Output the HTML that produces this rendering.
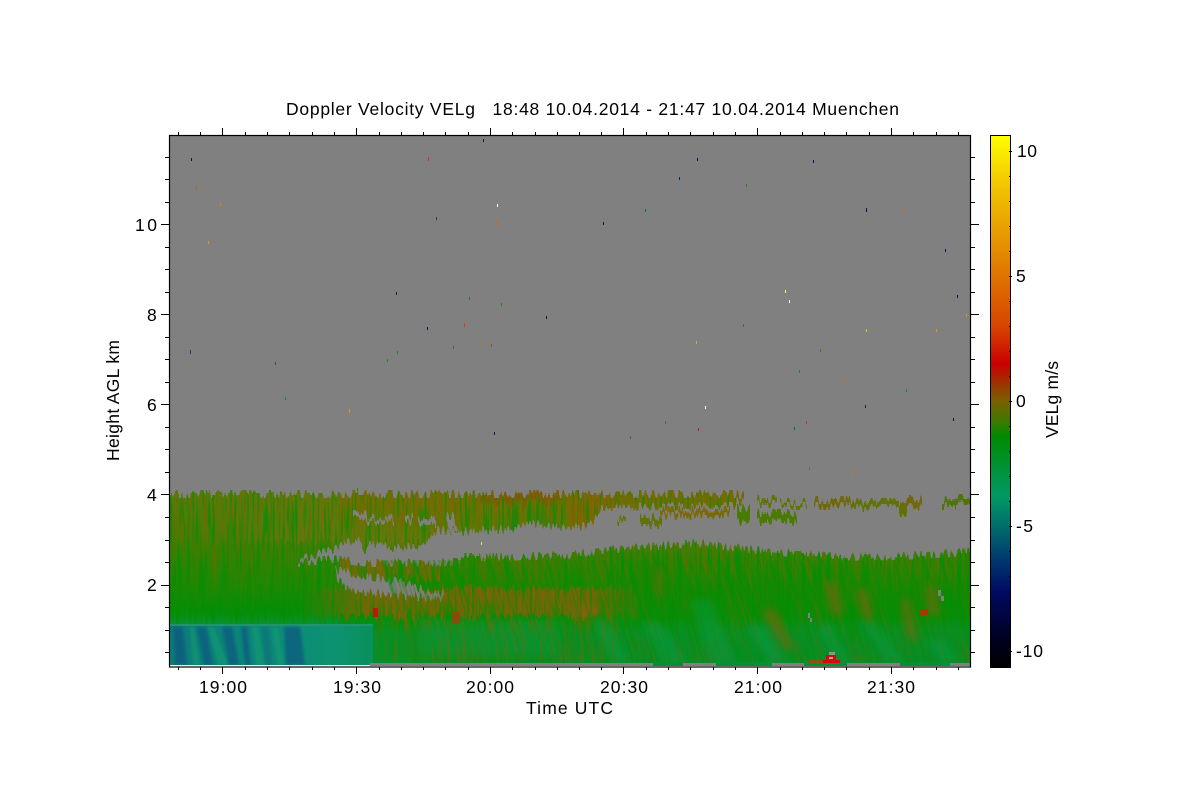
<!DOCTYPE html>
<html><head><meta charset="utf-8"><title>Doppler Velocity VELg</title>
<style>
html,body{margin:0;padding:0;background:#fff;width:1200px;height:800px;overflow:hidden}
svg{display:block}
text{font-family:"Liberation Sans",sans-serif;font-size:17.5px;fill:#000;white-space:pre}
</style></head><body>
<svg width="1200" height="800" viewBox="0 0 1200 800" xmlns="http://www.w3.org/2000/svg">
<defs>
<clipPath id="plot"><rect x="170" y="136" width="800" height="530"/></clipPath>
<clipPath id="lowR"><rect x="375" y="560" width="595" height="104"/></clipPath>
<linearGradient id="bar" x1="0" y1="135" x2="0" y2="667" gradientUnits="userSpaceOnUse">
<stop offset="0" stop-color="#ffff00"/>
<stop offset=".09" stop-color="#f2c800"/>
<stop offset=".23" stop-color="#e28600"/>
<stop offset=".36" stop-color="#d84400"/>
<stop offset=".43" stop-color="#ca0000"/>
<stop offset=".465" stop-color="#a03000"/>
<stop offset=".5" stop-color="#7a6000"/>
<stop offset=".54" stop-color="#3a7a00"/>
<stop offset=".565" stop-color="#008a00"/>
<stop offset=".68" stop-color="#009966"/>
<stop offset=".74" stop-color="#006a6a"/>
<stop offset=".79" stop-color="#003f70"/>
<stop offset=".86" stop-color="#000a60"/>
<stop offset=".95" stop-color="#000020"/>
<stop offset="1" stop-color="#000000"/>
</linearGradient>
<linearGradient id="left" x1="0" y1="494" x2="0" y2="626" gradientUnits="userSpaceOnUse">
<stop offset="0" stop-color="#5a7a0a"/><stop offset=".35" stop-color="#407e04"/>
<stop offset=".68" stop-color="#1e8802"/><stop offset=".9" stop-color="#068e06"/><stop offset="1" stop-color="#0a9030"/>
</linearGradient>
<linearGradient id="right" x1="0" y1="540" x2="0" y2="666" gradientUnits="userSpaceOnUse">
<stop offset="0" stop-color="#627408"/><stop offset=".12" stop-color="#3e7e04"/><stop offset=".35" stop-color="#148a02"/>
<stop offset=".62" stop-color="#068e08"/><stop offset=".72" stop-color="#049024"/><stop offset="1" stop-color="#068e28"/>
</linearGradient>
<linearGradient id="top" x1="0" y1="494" x2="0" y2="535" gradientUnits="userSpaceOnUse">
<stop offset="0" stop-color="#7a6a04"/><stop offset="1" stop-color="#5c7804"/>
</linearGradient>
<linearGradient id="fadeTop" x1="170" y1="0" x2="800" y2="0" gradientUnits="userSpaceOnUse">
<stop offset="0" stop-color="#62780c" stop-opacity="0"/><stop offset=".22" stop-color="#62780c" stop-opacity="1"/>
<stop offset="1" stop-color="#62780c" stop-opacity="1"/>
</linearGradient>
<linearGradient id="brown" x1="300" y1="0" x2="640" y2="0" gradientUnits="userSpaceOnUse">
<stop offset="0" stop-color="#866008" stop-opacity="0"/><stop offset=".2" stop-color="#866008" stop-opacity=".9"/>
<stop offset=".85" stop-color="#866008" stop-opacity=".95"/><stop offset="1" stop-color="#866008" stop-opacity=".2"/>
</linearGradient>
<linearGradient id="teal" x1="170" y1="0" x2="376" y2="0" gradientUnits="userSpaceOnUse">
<stop offset="0" stop-color="#0c7c78"/><stop offset=".55" stop-color="#0c8a78"/>
<stop offset=".8" stop-color="#0c9270"/><stop offset="1" stop-color="#0a9058"/>
</linearGradient>
<linearGradient id="fadeV" x1="0" y1="497" x2="0" y2="625" gradientUnits="userSpaceOnUse">
<stop offset="0" stop-color="#000"/><stop offset=".5" stop-color="#000" stop-opacity=".6"/><stop offset=".85" stop-color="#000" stop-opacity="0"/>
</linearGradient>
<filter id="sBrown" x="0" y="0" width="1" height="1" color-interpolation-filters="sRGB">
<feTurbulence type="fractalNoise" baseFrequency="0.42 0.022" numOctaves="2" seed="4"/>
<feColorMatrix values="0 0 0 0 .52  0 0 0 0 .38  0 0 0 0 0  5 0 0 0 -2.4"/>
<feComposite operator="in" in2="SourceAlpha"/>
</filter>
<filter id="sGreen" x="0" y="0" width="1" height="1" color-interpolation-filters="sRGB">
<feTurbulence type="fractalNoise" baseFrequency="0.4 0.02" numOctaves="2" seed="11"/>
<feColorMatrix values="0 0 0 0 0  0 0 0 0 .56  0 0 0 0 .02  5 0 0 0 -2.4"/>
<feComposite operator="in" in2="SourceAlpha"/>
</filter>
<filter id="jag" x="0" y="0" width="1" height="1" color-interpolation-filters="sRGB">
<feTurbulence type="fractalNoise" baseFrequency="0.4 0.015" numOctaves="1" seed="7" result="n"/>
<feColorMatrix in="n" values="0 0 0 0 .5  2.6 0 0 0 -.8  0 0 0 0 .5  0 0 0 0 1" result="m0"/>
<feComponentTransfer in="m0" result="m"><feFuncG type="discrete" tableValues="0 .2 .4 .6 .8 1"/></feComponentTransfer>
<feDisplacementMap in="SourceGraphic" in2="m" scale="8" xChannelSelector="R" yChannelSelector="G"/>
</filter>
<filter id="b1" x="-20%" y="-20%" width="140%" height="140%"><feGaussianBlur stdDeviation="1.4"/></filter>
<filter id="b3" x="-30%" y="-20%" width="160%" height="140%"><feGaussianBlur stdDeviation="4"/></filter>
</defs>

<text x="286" y="115" textLength="613" lengthAdjust="spacing" xml:space="preserve">Doppler Velocity VELg   18:48 10.04.2014 - 21:47 10.04.2014 Muenchen</text>

<g clip-path="url(#plot)">
<rect x="170" y="136" width="800" height="530" fill="#808080"/>
<g filter="url(#jag)">
<rect x="160" y="130" width="820" height="546" fill="none"/>
<rect x="160" y="494" width="200" height="136" fill="url(#left)"/>
<rect x="340" y="500" width="640" height="175" fill="url(#right)"/>
<rect x="160" y="494" width="660" height="48" fill="url(#fadeTop)"/>
<rect x="340" y="494" width="460" height="34" fill="url(#top)"/>
<rect x="295" y="588" width="345" height="29" fill="url(#brown)"/>
<rect x="340" y="560" width="100" height="18" fill="#7a6808"/>
<rect x="570" y="494" width="50" height="38" fill="#8a6204" opacity=".8"/>
<rect x="480" y="494" width="80" height="8" fill="#8c5206" opacity=".75"/>
<!-- streak overlays -->
<rect x="170" y="494" width="800" height="125" fill="url(#fadeV)" filter="url(#sBrown)" opacity=".6"/>
<rect x="170" y="494" width="800" height="125" fill="#000" filter="url(#sGreen)" opacity=".7"/>
<rect x="600" y="545" width="370" height="60" fill="#000" filter="url(#sGreen)" opacity=".5"/>
<!-- gray holes -->
<g fill="#808080">
<polygon points="338,548 345,543 360,539 366,553 369,542 393,548 423,546 437,530 457,532 513,529 527,523 570,528 590,525 603,507 735,506 740,488 985,488 985,551 903,556 837,557 757,550 700,543 603,550 570,555 493,557 463,557 457,562 370,563 333,559 298,563 298,560"/>
<polygon points="335,570 367,576 407,583 423,590 443,593 444,599 393,595 363,592 345,587 337,578"/>
<rect x="353" y="514" width="14" height="5"/><rect x="364" y="518" width="30" height="4"/>
<rect x="405" y="517" width="8" height="5"/><rect x="418" y="518" width="18" height="6"/>
<polygon points="446,516 453,516 458,530 448,530"/>
</g>
<!-- islands of echo -->
<g fill="#5f7404">
<rect x="660" y="510" width="70" height="6" fill="#7a6a06"/>
<rect x="640" y="517" width="22" height="8"/><rect x="617" y="518" width="9" height="4"/>
<rect x="737" y="508" width="13" height="14" fill="#4a7a04"/><rect x="757" y="513" width="40" height="9" fill="#4a7a04"/>
<rect x="737" y="495" width="7" height="7" fill="#70680a"/>
<rect x="757" y="499" width="20" height="5"/><rect x="780" y="502" width="27" height="4"/>
<rect x="814" y="500" width="40" height="6" fill="#70680a"/><rect x="853" y="502" width="46" height="6"/>
<rect x="900" y="499" width="22" height="8" fill="#70680a"/><rect x="899" y="505" width="8" height="8"/>
<rect x="942" y="500" width="14" height="6" fill="#4f7604"/><rect x="955" y="495" width="18" height="6" fill="#4f7604"/>
</g>
</g>
<!-- lower-right fine slanted streaks -->
<g clip-path="url(#lowR)">
<g transform="translate(-190 0) skewX(17)">
<rect x="400" y="560" width="900" height="110" fill="#000" filter="url(#sBrown)" opacity=".28"/>
<rect x="400" y="560" width="900" height="110" fill="#000" filter="url(#sGreen)" opacity=".5"/>
</g>
</g>
<!-- broad slanted tones -->
<g fill="#0aa060" opacity=".3" filter="url(#b3)">
<polygon points="640,622 660,622 690,664 664,664"/>
<polygon points="690,600 712,600 735,664 712,664"/>
<polygon points="745,625 765,625 790,664 770,664"/>
<polygon points="818,625 832,625 850,664 836,664"/>
<polygon points="860,620 875,620 905,664 890,664"/>
<polygon points="925,640 945,640 960,664 945,664"/>
<polygon points="590,620 610,620 630,664 612,664"/>
<polygon points="420,620 560,620 560,655 420,655" opacity=".7"/>
</g>
<g fill="#866008" opacity=".6" filter="url(#b3)">
<polygon points="824,582 836,582 844,615 832,615"/>
<polygon points="855,590 866,590 874,618 864,618"/>
<polygon points="655,570 662,570 662,595 656,595"/>
<polygon points="900,600 908,600 918,640 908,640"/>
<polygon points="760,610 775,610 795,650 785,650"/>
<polygon points="925,585 935,585 940,615 928,615"/>
<polygon points="570,607 600,607 600,617 570,617"/>
</g>
<!-- thin brown specks in lower middle -->
<rect x="376" y="620" width="244" height="42" fill="#000" filter="url(#sBrown)" opacity=".4"/>
<!-- teal base left -->
<rect x="170" y="625" width="203" height="41" fill="url(#teal)"/>
<rect x="170" y="624" width="203" height="2" fill="#22946c"/>
<g fill="#0e5a80" opacity=".75" filter="url(#b1)">
<polygon points="173,627 183,627 187,665 175,665"/>
<polygon points="197,627 206,627 213,665 204,665"/>
<polygon points="222,627 232,627 239,665 229,665"/>
<polygon points="241,627 247,627 251,665 245,665"/>
<polygon points="284,627 300,627 305,665 286,665"/>
<polygon points="262,627 268,627 272,665 266,665" opacity=".5"/>
</g>
<g fill="#14a070" opacity=".5" filter="url(#b1)">
<polygon points="208,627 214,627 228,665 218,665"/>
<polygon points="190,627 194,627 200,665 193,665"/>
<polygon points="252,627 258,627 264,665 256,665"/>
<polygon points="272,627 278,627 284,665 278,665"/>
</g>
<!-- small reds & gray specks -->
<rect x="373" y="608" width="5" height="9" fill="#c01808"/>
<rect x="452" y="612" width="8" height="12" fill="#a04008" opacity=".8"/>
<rect x="920" y="609" width="8" height="6" fill="#a83808"/>
<rect x="938" y="590" width="3" height="6" fill="#808080"/><rect x="941" y="596" width="3" height="5" fill="#808080"/>
<rect x="808" y="613" width="2" height="5" fill="#808080"/><rect x="810" y="618" width="2" height="4" fill="#808080"/>
<!-- bottom strip -->
<g fill="#808080">
<rect x="370" y="663" width="385" height="3"/>
<rect x="683" y="663" width="33" height="3"/>
<rect x="772" y="663" width="32" height="3"/><rect x="847" y="663" width="53" height="3"/>
<rect x="950" y="663" width="20" height="3"/>
</g>
<g fill="#068e38"><rect x="653" y="662" width="30" height="4"/><rect x="716" y="662" width="56" height="4"/><rect x="804" y="660" width="43" height="6"/><rect x="900" y="662" width="50" height="4"/></g>
<rect x="170" y="665" width="200" height="1" fill="#e8f4f0"/>
<rect x="808" y="660" width="28" height="3" fill="#7e5a08"/>
<rect x="823" y="660" width="17" height="3" fill="#d40808"/>
<rect x="826" y="655" width="10" height="5" fill="#c81010"/>
<rect x="829" y="657" width="4" height="2" fill="#a8a8a8"/>
<rect x="829" y="652" width="6" height="3" fill="#909090"/>
<!-- scattered pixels -->
<g>
<rect x="191" y="158" width="1" height="3" fill="#0a1050"/><rect x="196" y="186" width="1" height="3" fill="#e05000"/>
<rect x="220" y="203" width="1" height="3" fill="#e88000"/><rect x="208" y="241" width="1" height="3" fill="#e89000"/>
<rect x="428" y="157" width="1" height="4" fill="#d83000"/><rect x="483" y="139" width="1" height="3" fill="#0a1050"/>
<rect x="697" y="158" width="1" height="3" fill="#0a1050"/><rect x="679" y="177" width="1" height="3" fill="#00304a"/>
<rect x="813" y="160" width="1" height="3" fill="#0a1050"/><rect x="746" y="184" width="1" height="3" fill="#1a8a20"/>
<rect x="436" y="217" width="1" height="3" fill="#004a6a"/><rect x="497" y="204" width="1" height="3" fill="#ffffff"/>
<rect x="497" y="221" width="1" height="5" fill="#e06000"/><rect x="603" y="222" width="1" height="3" fill="#0a1050"/>
<rect x="645" y="209" width="1" height="3" fill="#00707a"/><rect x="866" y="208" width="1" height="4" fill="#0a1050"/>
<rect x="902" y="209" width="1" height="3" fill="#e07000"/><rect x="945" y="249" width="1" height="3" fill="#0a1050"/>
<rect x="785" y="290" width="1" height="3" fill="#ffff30"/><rect x="789" y="300" width="1" height="3" fill="#ffffff"/>
<rect x="957" y="295" width="1" height="3" fill="#0a1050"/><rect x="396" y="292" width="1" height="3" fill="#0a1050"/>
<rect x="469" y="297" width="1" height="3" fill="#1a8a20"/><rect x="501" y="303" width="1" height="3" fill="#1a8a20"/>
<rect x="427" y="327" width="1" height="3" fill="#0a1050"/><rect x="464" y="323" width="1" height="4" fill="#e04000"/>
<rect x="546" y="316" width="1" height="3" fill="#0a1050"/><rect x="743" y="324" width="1" height="3" fill="#1a8a20"/>
<rect x="866" y="329" width="1" height="3" fill="#f0c000"/><rect x="936" y="329" width="1" height="3" fill="#e89000"/>
<rect x="966" y="314" width="1" height="3" fill="#e89000"/><rect x="190" y="350" width="1" height="4" fill="#104080"/>
<rect x="275" y="362" width="1" height="3" fill="#006a6a"/><rect x="387" y="359" width="1" height="3" fill="#1a8a20"/>
<rect x="397" y="351" width="1" height="3" fill="#1a8a20"/><rect x="453" y="346" width="1" height="3" fill="#1a8a20"/>
<rect x="481" y="342" width="1" height="3" fill="#e07000"/><rect x="491" y="344" width="1" height="3" fill="#a05000"/>
<rect x="696" y="341" width="1" height="3" fill="#e8a040"/><rect x="820" y="349" width="1" height="3" fill="#a05000"/>
<rect x="799" y="370" width="1" height="3" fill="#1a8a20"/><rect x="845" y="380" width="1" height="3" fill="#e07000"/>
<rect x="906" y="389" width="1" height="3" fill="#0a9050"/><rect x="285" y="397" width="1" height="3" fill="#0a9050"/>
<rect x="349" y="409" width="1" height="4" fill="#e89000"/><rect x="705" y="406" width="1" height="3" fill="#ffffff"/>
<rect x="865" y="405" width="1" height="3" fill="#00304a"/><rect x="953" y="418" width="1" height="3" fill="#0a1050"/>
<rect x="806" y="421" width="1" height="3" fill="#d83000"/><rect x="794" y="427" width="1" height="3" fill="#00707a"/>
<rect x="698" y="428" width="1" height="3" fill="#d02000"/><rect x="665" y="421" width="1" height="3" fill="#1a8a20"/>
<rect x="630" y="436" width="1" height="3" fill="#1a8a20"/><rect x="494" y="432" width="1" height="3" fill="#0a1050"/>
<rect x="809" y="467" width="1" height="3" fill="#6a7a10"/><rect x="852" y="472" width="1" height="3" fill="#e07000"/>
<rect x="357" y="488" width="1" height="3" fill="#1a8a20"/><rect x="481" y="542" width="1" height="3" fill="#f0e030"/>
</g>
</g>

<!-- frame -->
<rect x="169.5" y="135.5" width="801" height="531.5" fill="none" stroke="#000" stroke-width="1.2"/>
<g stroke="#000" stroke-width="1" fill="none" shape-rendering="crispEdges">
<path d="M222.5 128V135M356.5 128V135M490.5 128V135M623.5 128V135M757.5 128V135M891.5 128V135"/>
<path d="M178.5 132V135M200.5 132V135M245.5 132V135M267.5 132V135M289.5 132V135M312.5 132V135M334.5 132V135M379.5 132V135M401.5 132V135M423.5 132V135M445.5 132V135M468.5 132V135M512.5 132V135M535.5 132V135M557.5 132V135M579.5 132V135M601.5 132V135M646.5 132V135M668.5 132V135M690.5 132V135M713.5 132V135M735.5 132V135M780.5 132V135M802.5 132V135M824.5 132V135M846.5 132V135M869.5 132V135M913.5 132V135M936.5 132V135M958.5 132V135"/>
<path d="M222.5 667V674M356.5 667V674M490.5 667V674M623.5 667V674M757.5 667V674M891.5 667V674"/>
<path d="M178.5 667V670M200.5 667V670M245.5 667V670M267.5 667V670M289.5 667V670M312.5 667V670M334.5 667V670M379.5 667V670M401.5 667V670M423.5 667V670M445.5 667V670M468.5 667V670M512.5 667V670M535.5 667V670M557.5 667V670M579.5 667V670M601.5 667V670M646.5 667V670M668.5 667V670M690.5 667V670M713.5 667V670M735.5 667V670M780.5 667V670M802.5 667V670M824.5 667V670M846.5 667V670M869.5 667V670M913.5 667V670M936.5 667V670M958.5 667V670"/>
<path d="M161 224.5H169M161 314.5H169M161 404.5H169M161 494.5H169M161 585.5H169"/>
<path d="M165 157.5H169M165 179.5H169M165 202.5H169M165 247.5H169M165 269.5H169M165 292.5H169M165 337.5H169M165 359.5H169M165 382.5H169M165 427.5H169M165 449.5H169M165 472.5H169M165 517.5H169M165 540.5H169M165 562.5H169M165 607.5H169M165 630.5H169M165 652.5H169"/>
<path d="M971 224.5H979M971 314.5H979M971 404.5H979M971 494.5H979M971 585.5H979"/>
<path d="M971 157.5H975M971 179.5H975M971 202.5H975M971 247.5H975M971 269.5H975M971 292.5H975M971 337.5H975M971 359.5H975M971 382.5H975M971 427.5H975M971 449.5H975M971 472.5H975M971 517.5H975M971 540.5H975M971 562.5H975M971 607.5H975M971 630.5H975M971 652.5H975"/>
</g>

<!-- colorbar -->
<rect x="990.5" y="135.5" width="20" height="532" fill="url(#bar)" stroke="#000" stroke-width="1"/>
<g stroke="#000" stroke-width="1" shape-rendering="crispEdges">
<path d="M1009 151.5H1012M1009 176.5H1011M1009 201.5H1011M1009 226.5H1011M1009 251.5H1011M1009 276.5H1012M1009 301.5H1011M1009 326.5H1011M1009 351.5H1011M1009 376.5H1011M1009 401.5H1012M1009 426.5H1011M1009 451.5H1011M1009 476.5H1011M1009 501.5H1011M1009 526.5H1012M1009 551.5H1011M1009 576.5H1011M1009 601.5H1011M1009 626.5H1011M1009 651.5H1012"/>
</g>

<!-- labels -->
<g>
<text x="199" y="693" textLength="48" lengthAdjust="spacing">19:00</text>
<text x="333" y="693" textLength="48" lengthAdjust="spacing">19:30</text>
<text x="466" y="693" textLength="48" lengthAdjust="spacing">20:00</text>
<text x="600" y="693" textLength="48" lengthAdjust="spacing">20:30</text>
<text x="734" y="693" textLength="48" lengthAdjust="spacing">21:00</text>
<text x="867" y="693" textLength="48" lengthAdjust="spacing">21:30</text>
<text x="526" y="714" textLength="87" lengthAdjust="spacing">Time UTC</text>
<text x="135" y="231" textLength="22" lengthAdjust="spacing">10</text>
<text x="147" y="321">8</text>
<text x="147" y="411">6</text>
<text x="147" y="501">4</text>
<text x="147" y="591">2</text>
<text x="1017" y="157" textLength="20" lengthAdjust="spacing">10</text>
<text x="1016" y="282">5</text>
<text x="1016" y="407">0</text>
<text x="1016" y="532" textLength="17" lengthAdjust="spacing">-5</text>
<text x="1016" y="657" textLength="27" lengthAdjust="spacing">-10</text>
<text transform="translate(119 461) rotate(-90)" textLength="121" lengthAdjust="spacing">Height AGL km</text>
<text transform="translate(1058 438) rotate(-90)" textLength="77" lengthAdjust="spacing">VELg m/s</text>
</g>
</svg>
</body></html>
